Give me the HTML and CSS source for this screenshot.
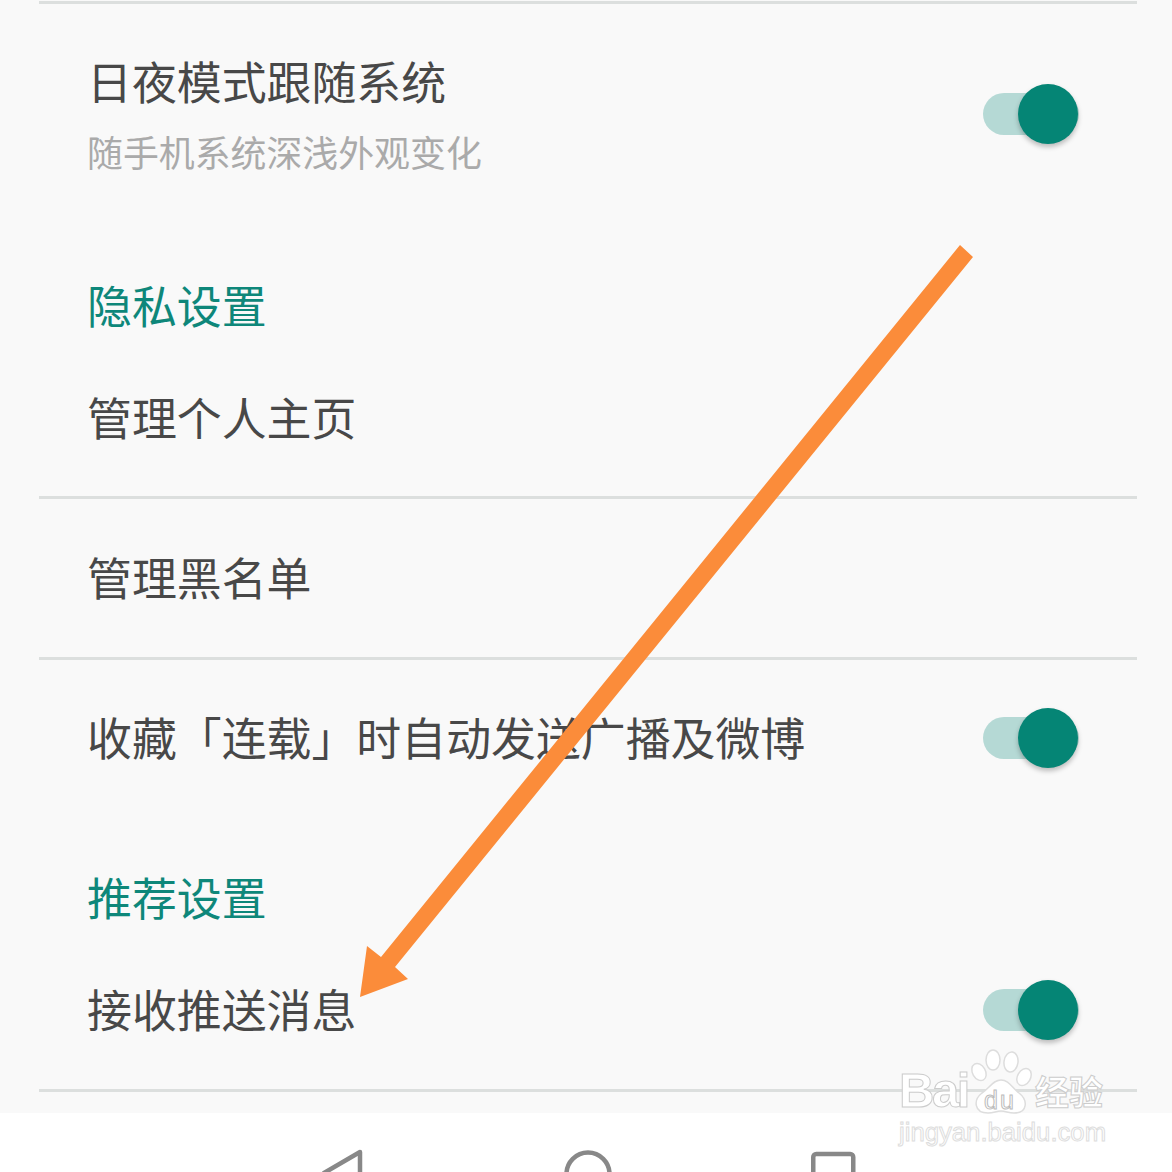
FILE: index.html
```html
<!DOCTYPE html>
<html lang="zh">
<head>
    <meta charset="UTF-8">
    <meta name="viewport" content="width=device-width, initial-scale=1.0">
    <title>设置</title>
    <link rel="stylesheet" href="styles.css">
</head>
<body>
    <div class="screen">
        <div class="settings">
            <div class="divider divider-top"></div>

            <div class="row row-theme">
                <div class="row-text">
                    <div class="row-title">日夜模式跟随系统</div>
                    <div class="row-sub">随手机系统深浅外观变化</div>
                </div>
                <div class="toggle"><span class="knob"></span></div>
            </div>

            <div class="section-title section-privacy">隐私设置</div>
            <div class="row row-profile">
                <div class="row-title">管理个人主页</div>
            </div>
            <div class="divider"></div>
            <div class="row row-black">
                <div class="row-title">管理黑名单</div>
            </div>
            <div class="divider"></div>
            <div class="row row-share">
                <div class="row-title">收藏「连载」时自动发送广播及微博</div>
                <div class="toggle"><span class="knob"></span></div>
            </div>

            <div class="section-title section-recommend">推荐设置</div>
            <div class="row row-push">
                <div class="row-title">接收推送消息</div>
                <div class="toggle"><span class="knob"></span></div>
            </div>
            <div class="divider"></div>
        </div>

        <div class="navbar">
            <svg class="nav-icon" width="50" height="60" viewBox="0 0 50 60">
                <path d="M45 3 L9 24 L45 45 Z" fill="none" stroke="#888" stroke-width="4.5" stroke-linejoin="round"/>
            </svg>
            <svg class="nav-icon" width="50" height="60" viewBox="0 0 50 60">
                <circle cx="25" cy="25" r="21.5" fill="none" stroke="#888" stroke-width="4.5"/>
            </svg>
            <svg class="nav-icon" width="50" height="60" viewBox="0 0 50 60">
                <rect x="2.25" y="5" width="40" height="44" rx="3" fill="none" stroke="#888" stroke-width="4.5"/>
            </svg>
        </div>

        <!-- arrow drawn on top of the screenshot -->
        <svg class="arrow" width="1172" height="1172" viewBox="0 0 1172 1172">
            <path d="M960 245 L973 257 L395 967 L408 979 L360 997 L367 946 L381 957 Z" fill="#fb8c3a"/>
        </svg>

        <div class="watermark">
            <div class="wm-top">
                <span class="wm-logo">Bai</span>
                <span class="wm-paw">
                    <svg width="65" height="72" viewBox="0 0 65 72">
                        <g fill="#fff" stroke="#ddd" stroke-width="1.5">
                            <ellipse cx="9" cy="26" rx="6.5" ry="9" transform="rotate(-30 9 26)"/>
                            <ellipse cx="23" cy="14" rx="7" ry="10"/>
                            <ellipse cx="41" cy="16" rx="7" ry="10" transform="rotate(8 41 16)"/>
                            <ellipse cx="54" cy="31" rx="6.5" ry="9" transform="rotate(30 54 31)"/>
                            <path d="M31 34 C39 34 42 42 49 47 C58 54 58 67 44 67 C38 67 36 65 31 65 C26 65 24 67 18 67 C4 67 3 54 12 47 C20 42 23 34 31 34 Z"/>
                        </g>
                    </svg>
                    <span class="wm-du">du</span>
                </span>
                <span class="wm-jingyan">经验</span>
            </div>
            <div class="wm-url">jingyan.baidu.com</div>
        </div>
    </div>
</body>
</html>
```
FILE: styles.css
```css
body {
    margin: 0;
    font-family: "Noto Sans CJK SC", "Noto Sans", sans-serif;
    background-color: #fff;
}
.screen {
    position: relative;
    width: 1172px;
    height: 1172px;
    overflow: hidden;
}
.settings {
    height: 1113px;
    background-color: #f9f9f9;
    padding-top: 1px;
    box-sizing: border-box;
}
.divider {
    height: 3px;
    margin: 0 35px 0 39px;
    background-color: #dcdfde;
}
.row {
    display: flex;
    justify-content: space-between;
    align-items: center;
    padding: 0 93px 0 87px;
    box-sizing: border-box;
}
.row-title {
    font-size: 44.9px;
    line-height: 60px;
    color: #484848;
}
.row-sub {
    font-size: 35.9px;
    line-height: 48px;
    margin-top: 16px;
    color: #aaa;
}
.row-theme {
    height: 226px;
    padding-top: 50px;
    align-items: flex-start;
}
.row-theme .row-text {
    margin-top: -3px;
}
.row-theme .toggle {
    margin-top: 39px;
}
.row-profile {
    height: 161px;
    padding-top: 3px;
}
.row-black {
    height: 158px;
    padding-bottom: 2px;
}
.row-share {
    height: 158px;
    padding-bottom: 4px;
}
.row-share .toggle, .row-push .toggle {
    margin-top: 2px;
}
.row-push {
    height: 162px;
    padding-top: 2px;
}
.section-title {
    font-size: 44.9px;
    line-height: 60px;
    color: #0e877a;
    padding-left: 87px;
}
.section-privacy {
    padding-top: 45px;
}
.section-recommend {
    padding-top: 49px;
}
.toggle {
    position: relative;
    flex: none;
    width: 96px;
    height: 42px;
    background-color: #b5d9d5;
    border-radius: 21px;
}
.knob {
    position: absolute;
    left: 35px;
    top: -9px;
    width: 60px;
    height: 60px;
    border-radius: 50%;
    background-color: #058575;
    box-shadow: 0 3px 5px rgba(0,0,0,0.25);
}
.navbar {
    height: 59px;
    background-color: #fff;
    overflow: hidden;
    display: flex;
    padding: 36px 0 0 315px;
    gap: 198px;
    box-sizing: border-box;
}
.nav-icon {
    flex: none;
}
.arrow {
    position: absolute;
    left: 0;
    top: 0;
}
.watermark {
    position: absolute;
    left: 899px;
    top: 1046px;
    width: 215px;
    color: #fff;
}
.wm-top {
    display: flex;
    align-items: flex-end;
    height: 72px;
}
.wm-logo {
    width: 71px;
    font-family: "Liberation Sans", sans-serif;
    font-size: 49px;
    font-weight: bold;
    line-height: 56px;
    letter-spacing: -2.5px;
    -webkit-text-stroke: 1px #ccc;
}
.wm-paw {
    position: relative;
    width: 65px;
    height: 72px;
}
.wm-du {
    position: absolute;
    left: 14px;
    top: 40px;
    font-family: "Liberation Sans", sans-serif;
    font-size: 25px;
    line-height: 28px;
    letter-spacing: 2px;
    color: #fff;
    -webkit-text-stroke: 1px #bbb;
}
.wm-jingyan {
    font-size: 34px;
    line-height: 54px;
    font-weight: bold;
    -webkit-text-stroke: 1px #ccc;
}
.wm-url {
    font-family: "Liberation Sans", sans-serif;
    font-size: 25.7px;
    line-height: 28px;
    -webkit-text-stroke: 1px #ddd;
}
```
